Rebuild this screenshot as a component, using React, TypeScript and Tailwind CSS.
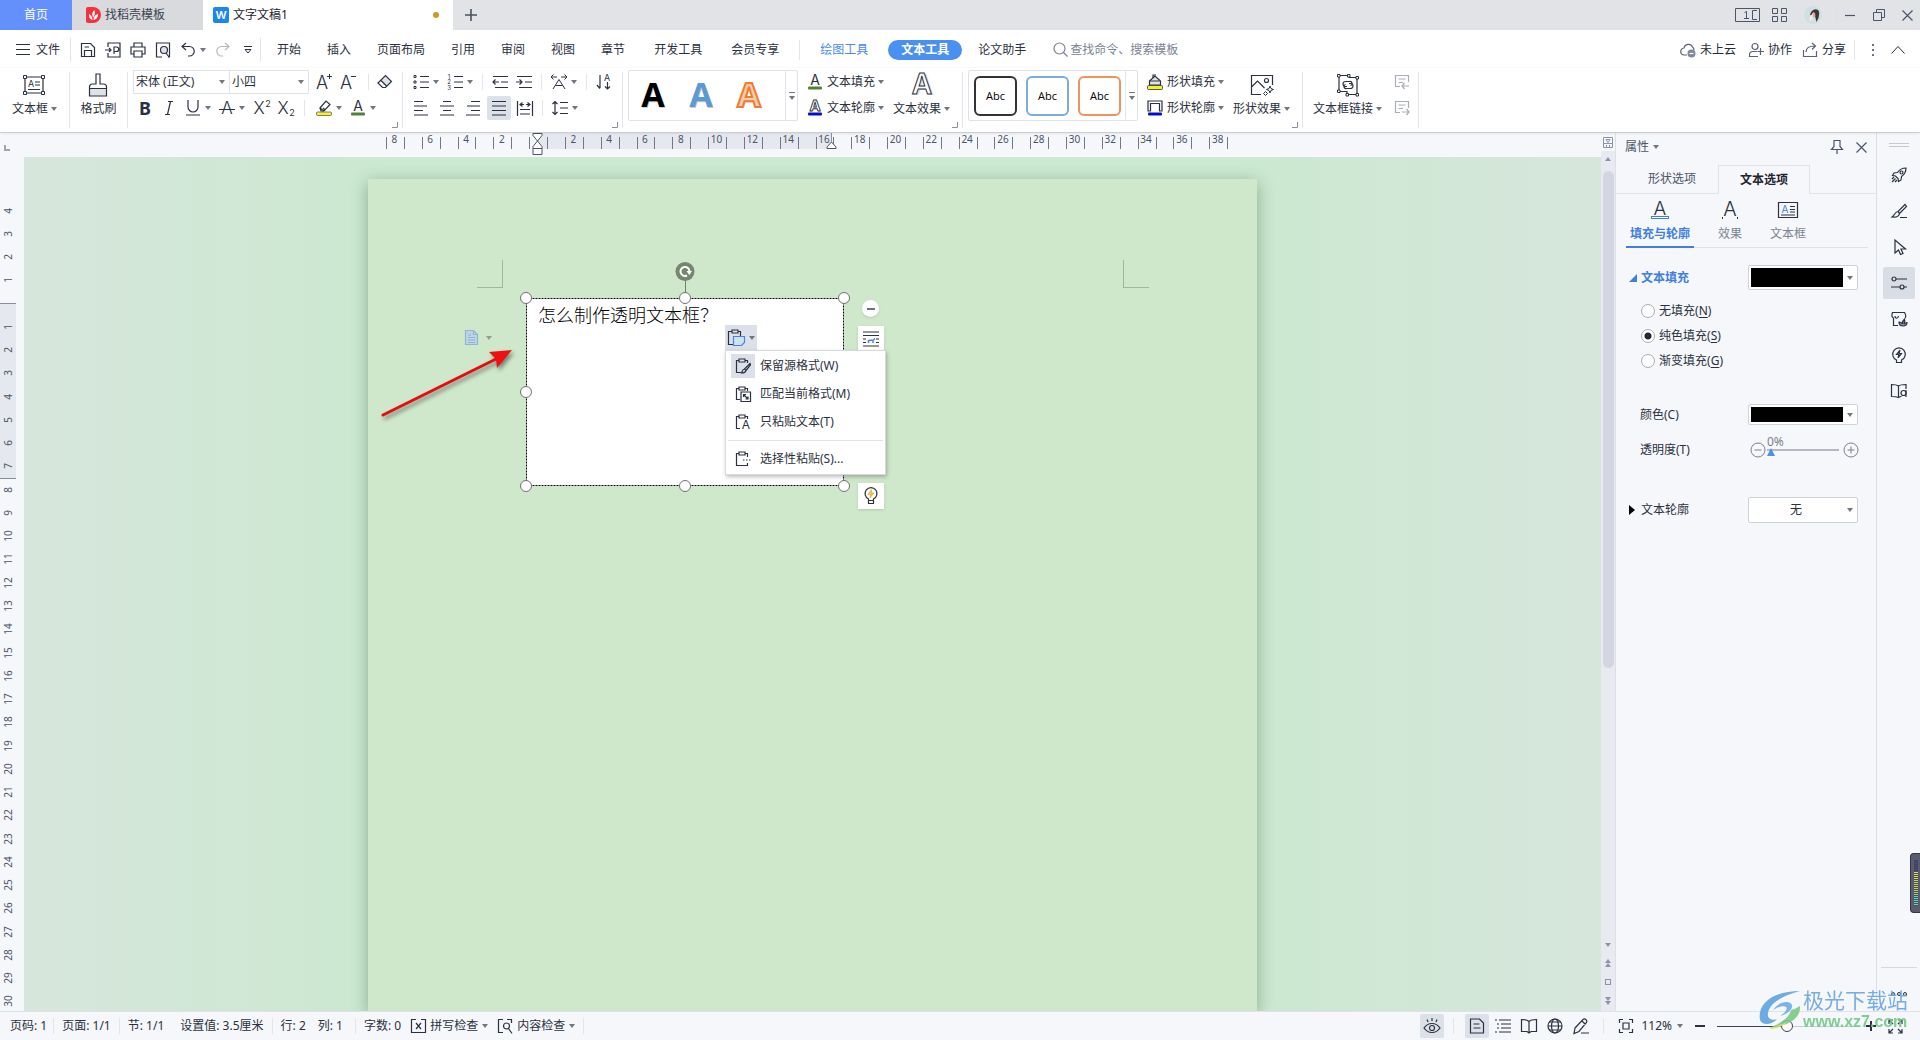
import clsx from "clsx";
import type { ReactNode } from "react";

const MAIN_TABS = ["开始", "插入", "页面布局", "引用", "审阅", "视图", "章节"];
const EXTRA_TABS = ["开发工具", "会员专享"];
const H_RULER = [8, 6, 4, 2, 0, ...Array.from({ length: 19 }, (_, i) => (i + 1) * 2)];
const V_RULER = [4, 3, 2, 1, 0, ...Array.from({ length: 30 }, (_, i) => i + 1)];

export default function App() {
	return (
		<div className="relative flex h-screen flex-col overflow-hidden bg-[#f5f7fa] font-['Noto_Sans','Noto_Sans_CJK_SC',sans-serif] text-xs leading-4 text-[#2b3140]">
			<TitleBar />
			<MenuBar />
			<Ribbon />
			<div className="flex min-h-0 flex-1 border-t border-[#dcdee3]">
				<VerticalRuler />
				<main className="flex min-w-0 flex-1 flex-col">
					<HorizontalRuler />
					<DocumentCanvas />
				</main>
				<ScrollBar />
				<PropertiesPanel />
				<SideToolbar />
			</div>
			<StatusBar />
			<MeterWidget />
			<Watermark />
		</div>
	);
}

/* ---------- shared bits ---------- */

function Icon({
	w = 16,
	h = 16,
	className,
	children,
}: {
	w?: number;
	h?: number;
	className?: string;
	children: ReactNode;
}) {
	return (
		<svg
			width={w}
			height={h}
			viewBox={`0 0 ${w} ${h}`}
			fill="none"
			stroke="currentColor"
			strokeWidth="1.2"
			aria-hidden="true"
			className={clsx("shrink-0 overflow-visible", className)}
		>
			{children}
		</svg>
	);
}

function Caret({ className }: { className?: string }) {
	return (
		<svg
			width="6"
			height="4"
			viewBox="0 0 6 4"
			aria-hidden="true"
			className={clsx("shrink-0", className ?? "fill-[#70757f]")}
		>
			<path d="M0 0h6L3 4z" />
		</svg>
	);
}

function VLine({ className }: { className?: string }) {
	return <span className={clsx("w-px shrink-0 bg-[#e3e5ea]", className)} />;
}

function IconButton({
	label,
	active,
	children,
}: {
	label: string;
	active?: boolean;
	children: ReactNode;
}) {
	return (
		<button
			type="button"
			aria-label={label}
			className={clsx(
				"flex h-6 w-6 shrink-0 items-center justify-center rounded-xs",
				active && "bg-[#dce0e8]",
			)}
		>
			{children}
		</button>
	);
}

function CaretButton({ label, children }: { label: string; children: ReactNode }) {
	return (
		<button
			type="button"
			aria-label={label}
			className="flex h-6 w-[34px] shrink-0 items-center"
		>
			<span className="flex w-6 justify-center">{children}</span>
			<Caret />
		</button>
	);
}

function GlyphText({
	x,
	y,
	size,
	children,
	className,
}: {
	x: number;
	y: number;
	size: number;
	children: ReactNode;
	className?: string;
}) {
	return (
		<text
			x={x}
			y={y}
			fontSize={size}
			textAnchor="middle"
			fill="currentColor"
			stroke="none"
			className={clsx("font-['Inter',sans-serif]", className ?? "font-light")}
		>
			{children}
		</text>
	);
}

/* ---------- title bar ---------- */

function TitleBar() {
	return (
		<header className="flex h-[30px] shrink-0 items-stretch bg-[#e1e3e7]">
			<button type="button" className="w-[72px] bg-[#6390fb] text-white">
				首页
			</button>
			<button
				type="button"
				className="flex w-[131px] items-center gap-1 bg-[#d8dadd] pl-3.5 text-[#3c4250]"
			>
				<svg width="15" height="16" viewBox="0 0 15 16" aria-hidden="true">
					<path d="M0 2a2 2 0 0 1 2-2h5a8 8 0 0 1 0 16H2a2 2 0 0 1-2-2z" fill="#f5313f" />
					<path
						d="M6.500 13C3.500 12 2.500 9.500 3 7c2 .8 3.500 3 3.500 6zM7 10.500C5.600 7.500 6.300 4.500 8.300 3c1.200 2.600.6 5.500-1.300 7.500zM7.500 13c0-3 1.700-5.500 4.500-6 .2 3-1.500 5.400-4.500 6z"
						fill="#fff"
					/>
				</svg>
				找稻壳模板
			</button>
			<button
				type="button"
				className="flex w-[250px] items-center gap-1 bg-white pl-2.5 text-[#1f2430]"
			>
				<span className="flex h-4 w-4 items-center justify-center rounded-xs bg-[#1a86f2] font-['Inter',sans-serif] text-[11px] font-semibold text-white">
					W
				</span>
				文字文稿1
				<span className="mr-3.5 ml-auto h-1.5 w-1.5 rounded-full bg-[#cf9a1d]" />
			</button>
			<button
				type="button"
				aria-label="新建标签"
				className="flex w-9 items-center justify-center text-[#4a5060]"
			>
				<Icon w={12} h={12}>
					<path d="M6 0v12M0 6h12" strokeWidth="1.6" />
				</Icon>
			</button>
			<div className="ml-auto flex items-center pr-[7px] text-[#4b5468]">
				<Icon w={25} h={14} className="mr-3">
					<path d="M.5.5h24v13H.5zM9.500 4.500l2-1v7M9 10.500h5M22 2.500h-4.500v9H22" strokeWidth="1" />
				</Icon>
				<Icon w={15} h={14} className="mr-[17px]">
					<path d="M.5.5h5v5h-5zM9.500.5h5v5h-5zM.5 8.500h5v5h-5zM9.500 8.500h5v5h-5z" strokeWidth="1" />
				</Icon>
				<svg width="18" height="18" viewBox="0 0 18 18" aria-hidden="true" className="mr-2.5">
					<circle cx="9" cy="9" r="9" fill="#cfdfe2" />
					<path d="M6 9c1-5 5-7 8-5 2 2 1 5 .5 8l-2 4-1.500-6z" fill="#3d3439" />
					<path d="m9 6.500 2 2-2.500 4.500L6 16l-.5-4z" fill="#f4ece9" />
					<path d="m9 6 2 1 .5 3-3 2z" fill="#d9a996" />
				</svg>
				<VLine className="mr-3 h-5 bg-[#c9ccd2]" />
				<Icon w={10} h={10} className="mr-[18px]">
					<path d="M0 5.500h10" />
				</Icon>
				<Icon w={12} h={12} className="mr-[17px]">
					<path d="M3.500 3V.5h8v8H9M.5 3.500h8v8h-8z" strokeWidth="1" />
				</Icon>
				<Icon w={11} h={11}>
					<path d="m.5.5 10 10m0-10-10 10" />
				</Icon>
			</div>
		</header>
	);
}

/* ---------- menu bar ---------- */

function MenuBar() {
	return (
		<div className="flex h-[38px] shrink-0 items-center bg-white pt-px">
			<button type="button" className="flex items-center gap-1.5 pl-4">
				<Icon w={14} h={11}>
					<path d="M0 .5h14M0 5.500h14M0 10.500h14" strokeWidth="1" />
				</Icon>
				文件
			</button>
			<VLine className="mr-[5px] ml-2.5 h-6" />
			<div className="flex gap-px">
				<IconButton label="保存">
					<Icon>
						<path d="M1.500 14.500v-13h9l4 4v9zM4.500 14.500v-6h7v6M4.500 5H9" />
					</Icon>
				</IconButton>
				<IconButton label="输出为PDF">
					<Icon>
						<path d="M3 5V1h12v14H3v-4M0 8h6M4 6l2 2-2 2M9 12V5h2.500a2 2 0 0 1 0 4.500H9" />
					</Icon>
				</IconButton>
				<IconButton label="打印">
					<Icon>
						<path d="M4 5V1h8v4M4 12H1V5h14v7h-3M4 9h8v6H4z" />
					</Icon>
				</IconButton>
				<IconButton label="打印预览">
					<Icon>
						<path d="M7 15H1.500V1h13v14H13" />
						<circle cx="9" cy="8" r="3.500" fill="#dfe2e8" />
						<path d="m11 11 3 4" />
					</Icon>
				</IconButton>
				<CaretButton label="撤销">
					<Icon>
						<path d="M6 1 2 4.500 6 8M2 4.500h7.500a4.700 4.700 0 0 1 0 9.500H8" />
					</Icon>
				</CaretButton>
				<IconButton label="恢复">
					<Icon className="text-[#b4b8c0]">
						<path d="m10 1 4 3.500L10 8M14 4.500H6.500a4.700 4.700 0 0 0 0 9.500H8" />
					</Icon>
				</IconButton>
				<IconButton label="自定义快速访问">
					<Icon w={8} h={8}>
						<path d="M0 .5h8M1 3.500h6L4 7z" strokeWidth="1" />
					</Icon>
				</IconButton>
			</div>
			<VLine className="mr-4 h-6" />
			<nav className="flex gap-[26px]">
				{MAIN_TABS.map((tab) => (
					<button key={tab} type="button">
						{tab}
					</button>
				))}
			</nav>
			<nav className="ml-[29px] flex gap-[29px]">
				{EXTRA_TABS.map((tab) => (
					<button key={tab} type="button">
						{tab}
					</button>
				))}
			</nav>
			<VLine className="mx-5 h-5" />
			<button type="button" className="text-[#4a8ae8]">
				绘图工具
			</button>
			<button
				type="button"
				className="ml-5 h-5 rounded-full bg-[#4a90f0] px-[13px] font-bold text-white"
			>
				文本工具
			</button>
			<button type="button" className="ml-4">
				论文助手
			</button>
			<label className="ml-[27px] flex items-center gap-0.5 text-[#7b8394]">
				<Icon w={15} h={15}>
					<circle cx="6.500" cy="6.500" r="5.500" />
					<path d="m10.500 10.500 4 4" />
				</Icon>
				<input
					aria-label="搜索"
					placeholder="查找命令、搜索模板"
					className="w-32 bg-transparent outline-none placeholder:text-[#7b8394]"
				/>
			</label>
			<div className="ml-auto flex items-center pr-[15px] text-[#262c3a]">
				<button type="button" className="flex items-center gap-1">
					<Icon className="text-[#5a6172]">
						<path d="M7 13H4.500A3.500 3.500 0 0 1 4 6a4.500 4.500 0 0 1 8.500-1c1 .8 1.500 2 1.500 3" />
						<circle cx="11.500" cy="11.500" r="4" fill="#7e879b" stroke="none" />
						<path d="M9.500 11.500h4" stroke="#fff" />
					</Icon>
					未上云
				</button>
				<button type="button" className="ml-3 flex items-center gap-1">
					<Icon className="text-[#5a6172]">
						<circle cx="7" cy="4.500" r="3" />
						<path d="M9 9.500H5A3.500 3.500 0 0 0 1.500 13v1.500H10M12.500 6v7M9.500 9.500H16" />
					</Icon>
					协作
				</button>
				<button type="button" className="ml-2.5 flex items-center gap-1">
					<Icon className="text-[#5a6172]">
						<path d="M1.500 8v6.500h13V9M4 10c0-4 3-6 9-6M10 1l3.500 3L10 7.500" />
					</Icon>
					分享
				</button>
				<VLine className="ml-2 h-5" />
				<Icon w={4} h={14} className="mx-4 text-[#6a7182]">
					<path d="M2 1v2M2 6v2M2 11v2" strokeWidth="2" />
				</Icon>
				<Icon w={14} h={8}>
					<path d="m.5 7.500 6.500-7 6.500 7" strokeWidth="1" />
				</Icon>
			</div>
		</div>
	);
}

/* ---------- ribbon ---------- */

function Ribbon() {
	return (
		<div className="relative z-10 flex h-16 shrink-0 bg-white shadow-[0_1px_3px_rgba(0,0,0,0.12)]">
			<div className="flex w-[69px] justify-center">
				<BigButton
					label="文本框"
					caret
					icon={
						<Icon w={24} h={22}>
							<path d="M3 3h18v16H3zM13 8h5M13 11h5M6 15.500h12" />
							<path d="M1.500 1.500h3v3h-3zM19.500 1.500h3v3h-3zM1.500 17.500h3v3h-3zM19.500 17.500h3v3h-3z" fill="#fff" strokeWidth="1" />
							<GlyphText x={9} y={13} size={9} className="font-normal">A</GlyphText>
						</Icon>
					}
				/>
			</div>
			<VLine className="my-1" />
			<div className="flex w-[57px] justify-center">
				<BigButton
					label="格式刷"
					icon={
						<Icon w={20} h={24}>
							<path d="M1 15h18v8H1z" fill="#dfe2e8" stroke="none" />
							<path d="M1.500 23V14c0-2 1-3 3-3H8V1h4v10h3.500c2 0 3 1 3 3v9zM1.500 15.500h17" />
						</Icon>
					}
				/>
			</div>
			<VLine className="my-1" />
			<FontGroup />
			<VLine className="my-1" />
			<ParagraphGroup />
			<VLine className="my-1" />
			<WordArtGroup />
			<VLine className="my-1" />
			<ShapeGroup />
			<VLine className="my-1" />
			<div className="flex w-[115px] pl-2.5">
				<BigButton
					label="文本框链接"
					caret
					icon={
						<Icon w={24} h={24}>
							<path d="M3 2.500h10v2h8v17H11v-3H3z" />
							<path d="M1.500 1.500h2.500v2.500h-2.500zM11.500 1.500h2.500v2.500h-2.500zM20 3.500h2.500V6H20zM1.500 17H4v2.500H1.500zM10 20.500h2.500v2.500H10zM20 20.500h2.500v2.500H20z" fill="#fff" strokeWidth="1" />
							<path d="M11 13.500H9.500a2 2 0 0 1 0-5h4a2 2 0 0 1 1 4M13 10.500h1.500a2 2 0 0 1 0 5h-4a2 2 0 0 1-1-4" />
						</Icon>
					}
				/>
				<div className="ml-2 flex flex-col gap-0.5 pt-0.5 text-[#a9adb6]">
					<IconButton label="上一文本框">
						<Icon>
							<path d="M6 12.500H1.500V1.500h13V8M4.500 5h7M4.500 8.500H9M15 12H8M10.500 9 8 12l2.500 3" />
						</Icon>
					</IconButton>
					<IconButton label="下一文本框">
						<Icon>
							<path d="M6 12.500H1.500V1.500h13V8M4.500 5h7M4.500 8.500H9M8 12h7M12.500 9l2.500 3-2.500 3" />
						</Icon>
					</IconButton>
				</div>
			</div>
			<VLine className="my-1" />
		</div>
	);
}

function BigButton({
	label,
	icon,
	caret,
}: {
	label: string;
	icon: ReactNode;
	caret?: boolean;
}) {
	return (
		<button type="button" className="flex shrink-0 flex-col items-center pt-1">
			<span className="flex h-[26px] items-center">{icon}</span>
			<span className="mt-[3px] flex items-center gap-[3px] whitespace-nowrap">
				{label}
				{caret && <Caret />}
			</span>
		</button>
	);
}

function Launcher() {
	return (
		<Icon w={6} h={6} className="absolute right-1 bottom-1 text-[#8a909c]">
			<path d="M0 5.500h5.500V0" strokeWidth="1" />
		</Icon>
	);
}

function FontGroup() {
	return (
		<div className="relative w-[274px] pl-[5px]">
			<div className="flex h-7 items-center">
				<div className="mr-[3px] flex h-6 w-44 shrink-0 border border-[#dfe2e8]">
					<label className="flex w-24 items-center border-r border-[#dfe2e8] pr-1">
						<select aria-label="字体" className="min-w-0 flex-1 appearance-none bg-transparent pl-0.5 outline-none">
							<option>宋体 (正文)</option>
						</select>
						<Caret />
					</label>
					<label className="flex flex-1 items-center pr-1">
						<select aria-label="字号" className="min-w-0 flex-1 appearance-none bg-transparent pl-0.5 outline-none">
							<option>小四</option>
						</select>
						<Caret />
					</label>
				</div>
				<IconButton label="增大字号">
					<Icon w={18} h={18}>
						<GlyphText x={7} y={16} size={18}>A</GlyphText>
						<path d="M12 3.500h5M14.500 1v5" strokeWidth="1" />
					</Icon>
				</IconButton>
				<IconButton label="减小字号">
					<Icon w={18} h={18}>
						<GlyphText x={7} y={16} size={18}>A</GlyphText>
						<path d="M12 3.500h5" strokeWidth="1" />
					</Icon>
				</IconButton>
				<VLine className="mx-2 h-4" />
				<button type="button" aria-label="清除格式">
					<Icon>
						<path d="m4 6.500 4.500-4.500 6 6-4.500 4.500z" fill="#dfe2e8" stroke="none" />
						<path d="m1 9 7.500-7.500 6 6L8.500 13.500H5.500zM4 6.500l6 6" />
					</Icon>
				</button>
			</div>
			<div className="flex h-6 items-center">
				<IconButton label="加粗">
					<span className="text-lg font-bold leading-5">B</span>
				</IconButton>
				<IconButton label="倾斜">
					<Icon>
						<path d="M7 1.500h5M4 14.500h5M9.500 1.500l-3 13" />
					</Icon>
				</IconButton>
				<CaretButton label="下划线">
					<Icon>
						<path d="M3 0v7a5 5 0 0 0 10 0V0M1 15h14" />
					</Icon>
				</CaretButton>
				<CaretButton label="删除线">
					<Icon>
						<GlyphText x={8} y={14} size={17}>A</GlyphText>
						<path d="M0 9.500h16" strokeWidth="1" />
					</Icon>
				</CaretButton>
				<IconButton label="上标">
					<Icon w={18} h={18}>
						<GlyphText x={7} y={15} size={17}>X</GlyphText>
						<GlyphText x={16} y={8} size={9} className="font-normal">2</GlyphText>
					</Icon>
				</IconButton>
				<IconButton label="下标">
					<Icon w={18} h={18}>
						<GlyphText x={7} y={15} size={17}>X</GlyphText>
						<GlyphText x={16} y={17} size={9} className="font-normal">2</GlyphText>
					</Icon>
				</IconButton>
				<VLine className="mx-[7px] h-4" />
				<CaretButton label="突出显示">
					<Icon>
						<path d="m5 11-1-3 6-7 4 3.500-6 6.500z" />
						<path d="m7 8 2 2M4 8l4 3" />
						<rect x=".5" y="12" width="15" height="3.500" rx="1" fill="#f7f22c" strokeWidth=".6" />
					</Icon>
				</CaretButton>
				<CaretButton label="字体颜色">
					<Icon>
						<GlyphText x={8} y={11} size={14} className="font-normal">A</GlyphText>
						<rect x="1" y="12.500" width="14" height="3" rx="1" fill="#548235" stroke="none" />
					</Icon>
				</CaretButton>
			</div>
			<Launcher />
		</div>
	);
}

function ParagraphGroup() {
	return (
		<div className="relative w-[219px] pl-1.5">
			<div className="flex h-7 items-center">
				<CaretButton label="项目符号">
					<Icon>
						<path d="M7 2.500h9M7 8h9M7 13.500h9" />
						<path d="M1 1.500h2v2H1zM1 7h2v2H1zM1 12.500h2v2H1z" strokeWidth="1" />
					</Icon>
				</CaretButton>
				<CaretButton label="编号">
					<Icon>
						<path d="M7 2.500h9M7 8h9M7 13.500h9" />
						<GlyphText x={2} y={5} size={6} className="font-normal">1</GlyphText>
						<GlyphText x={2} y={10} size={6} className="font-normal">2</GlyphText>
						<GlyphText x={2} y={16} size={6} className="font-normal">3</GlyphText>
					</Icon>
				</CaretButton>
				<VLine className="mx-[5px] h-4" />
				<IconButton label="减少缩进">
					<Icon>
						<path d="M1 2.500h15M9 8h7M3 13.500h13M7 8H1M3.500 5.500 1 8l2.500 2.500" />
					</Icon>
				</IconButton>
				<IconButton label="增加缩进">
					<Icon>
						<path d="M1 2.500h15M9 8h7M3 13.500h13M0 8h6M3.500 5.500 6 8l-2.500 2.500" />
					</Icon>
				</IconButton>
				<VLine className="mx-[5px] h-4" />
				<CaretButton label="中文版式">
					<Icon>
						<path d="m2 15 6-9.500 6 9.500M4.500 11.500h7" strokeWidth="1" />
						<path d="M6 3H0M2.500.5 0 3l2.500 2.500M10 3h6M13.500.5 16 3l-2.500 2.500" strokeWidth="1" />
					</Icon>
				</CaretButton>
				<VLine className="mx-[5px] h-4" />
				<IconButton label="排序">
					<Icon>
						<path d="M4 1v13M1 11l3 3.500M11.500 8v7M9 12.500l2.500 2.500 2.500-2.500" />
						<GlyphText x={11} y={7} size={9} className="font-normal">A</GlyphText>
					</Icon>
				</IconButton>
			</div>
			<div className="flex h-6 items-center gap-0.5">
				<IconButton label="左对齐">
					<Icon>
						<path d="M1 1.500h9M1 6h13M1 10.500h9M1 15h14" />
					</Icon>
				</IconButton>
				<IconButton label="居中">
					<Icon>
						<path d="M4 1.500h8M1 6h14M4 10.500h8M1 15h14" />
					</Icon>
				</IconButton>
				<IconButton label="右对齐">
					<Icon>
						<path d="M6 1.500h9M2 6h13M6 10.500h9M1 15h14" />
					</Icon>
				</IconButton>
				<IconButton label="两端对齐" active>
					<Icon>
						<path d="M1 1.500h14M1 6h14M1 10.500h14M1 15h14" />
					</Icon>
				</IconButton>
				<IconButton label="分散对齐">
					<Icon>
						<path d="M.5 1v15M15.500 1v15M3 4.500h4M9 4.500h4M5.500 2.500l-2.500 2 2.500 2M10.500 2.500l2.500 2-2.500 2M3 9.500h10M3 14h10" />
					</Icon>
				</IconButton>
				<VLine className="mx-[3px] h-4" />
				<CaretButton label="行距">
					<Icon>
						<path d="M3 1.500v13M.5 4 3 1.500 5.500 4M.5 12 3 14.500 5.500 12M8 2.500h8M8 8h8M8 13.500h8" />
					</Icon>
				</CaretButton>
			</div>
			<Launcher />
		</div>
	);
}

function GalleryMore() {
	return (
		<button
			type="button"
			aria-label="更多样式"
			className="ml-auto flex w-3 flex-col items-center justify-center gap-[3px] border-l border-[#e3e5ea]"
		>
			<span className="h-px w-1.5 bg-[#70757f]" />
			<Caret />
		</button>
	);
}

function RowButton({ icon, label }: { icon: ReactNode; label: string }) {
	return (
		<button type="button" className="flex h-6 items-center whitespace-nowrap">
			<span className="flex w-6 justify-center">{icon}</span>
			<span className="mr-[3px]">{label}</span>
			<Caret />
		</button>
	);
}

function WordArtGroup() {
	return (
		<div className="relative flex w-[339px] pl-[5px]">
			<div className="mt-0.5 flex h-[51px] w-[170px] shrink-0 rounded-xs border border-[#dfe2e8]">
				<ArtLetter fill="#000" stroke="none" />
				<ArtLetter fill="#5b9bd5" stroke="none" />
				<ArtLetter fill="#f8cbad" stroke="#ed7d31" />
				<GalleryMore />
			</div>
			<div className="ml-[5px] flex flex-col gap-0.5 pt-0.5">
				<RowButton
					label="文本填充"
					icon={
						<Icon>
							<GlyphText x={8} y={11} size={14} className="font-normal">A</GlyphText>
							<rect x="1" y="12.500" width="14" height="3" rx="1" fill="#548235" stroke="none" />
						</Icon>
					}
				/>
				<RowButton
					label="文本轮廓"
					icon={
						<Icon>
							<text x="8" y="11" fontSize="15" textAnchor="middle" fill="#fff" strokeWidth=".9" className="font-['Inter',sans-serif] font-bold">
								A
							</text>
							<rect x="1" y="12.500" width="14" height="3" rx="1" fill="#0a0acb" stroke="none" />
						</Icon>
					}
				/>
			</div>
			<div className="ml-[9px]">
				<BigButton
					label="文本效果"
					caret
					icon={
						<Icon w={26} h={24}>
							<text x="15" y="22" fontSize="28" textAnchor="middle" fill="#dfe0e3" stroke="none" className="font-['Inter',sans-serif] font-semibold">
								A
							</text>
							<text x="13" y="21" fontSize="28" textAnchor="middle" fill="#fff" strokeWidth="1" className="font-['Inter',sans-serif] font-semibold">
								A
							</text>
						</Icon>
					}
				/>
			</div>
			<Launcher />
		</div>
	);
}

function ArtLetter({ fill, stroke }: { fill: string; stroke: string }) {
	return (
		<button type="button" aria-label="艺术字样式" className="flex w-12 items-center justify-center">
			<svg width="32" height="32" viewBox="0 0 32 32" aria-hidden="true" className="overflow-visible">
				<text x="17" y="28" fontSize="34" textAnchor="middle" fill="#000" opacity=".2" className="font-['Open_Sans',sans-serif] font-bold">
					A
				</text>
				<text x="16" y="27" fontSize="34" textAnchor="middle" fill={fill} stroke={stroke} strokeWidth="2" className="font-['Open_Sans',sans-serif] font-bold">
					A
				</text>
			</svg>
		</button>
	);
}

function ShapeGroup() {
	const shape = "h-10 w-[43px] rounded-md border-2 font-['Open_Sans',sans-serif] text-[11px] text-black";
	return (
		<div className="relative flex w-[339px] pl-[5px]">
			<div className="mt-0.5 flex h-[51px] w-[170px] shrink-0 items-stretch rounded-xs border border-[#dfe2e8]">
				<div className="flex items-center gap-[9px] pl-[5px]">
					<button type="button" className={clsx(shape, "border-[#333]")}>Abc</button>
					<button type="button" className={clsx(shape, "border-[#7dabdd]")}>Abc</button>
					<button type="button" className={clsx(shape, "border-[#f0935a]")}>Abc</button>
				</div>
				<GalleryMore />
			</div>
			<div className="ml-[5px] flex flex-col gap-0.5 pt-0.5">
				<RowButton
					label="形状填充"
					icon={
						<Icon>
							<path d="M2.500 7 8 2l5.500 5v4h-11z" fill="#dfe2e8" />
							<path d="M2.500 7h10M6 4V1h3" />
							<rect x=".5" y="11.500" width="15" height="4" rx="1" fill="#f7f22c" strokeWidth=".8" />
						</Icon>
					}
				/>
				<RowButton
					label="形状轮廓"
					icon={
						<Icon>
							<path d="M1 11V1h14v10h-2.500V3.500h-9V11z" />
							<rect x="1" y="12.500" width="14" height="3" rx="1" fill="#0a0acb" stroke="none" />
						</Icon>
					}
				/>
			</div>
			<div className="ml-[9px]">
				<BigButton
					label="形状效果"
					caret
					icon={
						<Icon w={24} h={22}>
							<path d="M11 20.500H1.500v-19h21V11M1.500 13l6-6 7 7" />
							<circle cx="16.500" cy="6.500" r="2" />
							<path d="m20 12 1 2.500 2.500 1-2.500 1L20 19l-1-2.500-2.500-1 2.500-1zM15.500 17.500l2 2-2 2-2-2z" strokeWidth="1" />
						</Icon>
					}
				/>
			</div>
			<Launcher />
		</div>
	);
}

/* ---------- rulers ---------- */

function VerticalRuler() {
	return (
		<div className="flex w-6 shrink-0 flex-col overflow-hidden text-[10px] text-[#4b5468]">
			<Icon w={6} h={6} className="mt-3 ml-1 text-[#a0a4ad]">
				<path d="M1 0v5h5" strokeWidth="2" />
			</Icon>
			<div className="mt-12 grid h-[814px] w-4 shrink-0 grid-rows-[repeat(35,1fr)] bg-[linear-gradient(transparent_104px,#8a8fa0_104px,#8a8fa0_105px,#e5e8ee_105px,#e5e8ee_279px,#8a8fa0_279px,#8a8fa0_280px,transparent_280px)]">
				{V_RULER.map((n, i) => (
					<span key={i} className="flex items-center justify-center">
						{n > 0 && <span className="-rotate-90 leading-3">{n}</span>}
					</span>
				))}
			</div>
		</div>
	);
}

function HorizontalRuler() {
	return (
		<div className="flex h-6 shrink-0 justify-center text-[10px] text-[#4b5468]">
			<div className="relative w-[889px] pl-[18px]">
				<div className="absolute top-0 left-[169px] h-4 w-[294px] bg-[#e5e8ee]" />
				<div className="relative grid h-4 w-[859px] grid-cols-[repeat(24,1fr)]">
					{H_RULER.map((n, i) => (
						<span key={i} className="grid grid-cols-2">
							<span className="mt-1 h-3 border-l border-[#70788c] pr-0.5 text-center leading-1">
								{n > 0 && n}
							</span>
							<span className="mt-1 h-3 border-l border-[#70788c]" />
						</span>
					))}
				</div>
				<Icon w={11} h={22} className="absolute top-0 left-[164px]">
					<path d="M1 .5h9v2L5.500 8 10 13.500v2H1v-2L5.500 8 1 2.500zM1 15.500h9v6H1z" fill="#fff" strokeWidth="1" />
				</Icon>
				<Icon w={11} h={16} className="absolute top-0 left-[458px]">
					<path d="M5.500 0v9" stroke="#8a8fa0" strokeWidth="1" />
					<path d="m5.500 9 4.500 5v1.500H1V14z" fill="#fff" strokeWidth="1" />
				</Icon>
			</div>
		</div>
	);
}

/* ---------- document ---------- */

const HANDLES = [
	"top-0 left-0",
	"top-0 left-1/2",
	"top-0 left-full",
	"top-1/2 left-0",
	"top-full left-0",
	"top-full left-1/2",
	"top-full left-full",
];

function DocumentCanvas() {
	return (
		<div className="flex min-h-0 flex-1 justify-center overflow-hidden bg-[linear-gradient(90deg,#d7e6dc,#cbe8d0_22%,#cbe8d0_78%,#d7e6dc)] pt-[22px]">
			<div className="relative w-[889px] shrink-0 bg-[#cfe8cb] shadow-[0_4px_16px_rgba(40,80,50,0.4)]">
				{/* margin corners */}
				<div className="absolute top-[81px] left-[109px] h-7 w-[26px] border-r border-b border-[#a3b5a2]" />
				<div className="absolute top-[81px] left-[755px] h-7 w-[26px] border-b border-l border-[#a3b5a2]" />

				<div className="absolute top-[151px] left-[97px] flex items-center gap-2">
					<Icon w={13} h={15} className="text-[#93b4d6]">
						<path d="M.5.5h8l4 4v10H.5z" fill="#bdd5e0" />
						<path d="M8.500.5v4h4M3 5h3M3 7.500h7M3 10h7M3 12.500h7" />
					</Icon>
					<Caret className="fill-[#8fa08d]" />
				</div>

				<svg
					width="140"
					height="76"
					viewBox="0 0 140 76"
					aria-hidden="true"
					className="absolute top-[167px] left-[10px] drop-shadow-[2px_3px_2px_rgba(0,0,0,0.45)]"
				>
					<path d="M5 69 122 11" stroke="#e60d0d" strokeWidth="3" strokeLinecap="round" />
					<path d="m134 4-15 18-1-9-7-7z" fill="#f01010" />
				</svg>

				{/* selected text box */}
				<div className="absolute top-[119px] left-[158px] h-[188px] w-[318px] bg-white">
					<svg width="318" height="188" aria-hidden="true" className="absolute inset-0">
						<rect x=".5" y=".5" width="317" height="187" fill="none" stroke="#000" strokeDasharray="2 1" />
					</svg>
					<p className="mt-1.5 ml-3 font-['Noto_Sans_CJK_SC',sans-serif] text-lg leading-5 font-light text-black">
						怎么制作透明文本框？
					</p>
					<div className="absolute -top-6 left-1/2 h-6 w-px bg-[#6f7f6d]" />
					<div className="absolute -top-9 left-1/2 flex h-[19px] w-[19px] -translate-x-1/2 items-center justify-center rounded-full bg-[#76866f]">
						<Icon w={13} h={13} className="text-white">
							<path d="M8.500 10.500A4.500 4.500 0 1 1 11 6.500" strokeWidth="2" />
							<path d="M8 6h5.500l-2.800 4z" fill="#fff" stroke="none" />
						</Icon>
					</div>
					{HANDLES.map((pos) => (
						<span
							key={pos}
							className={clsx(
								"absolute h-3 w-3 -translate-x-1/2 -translate-y-1/2 rounded-full border border-[#707070] bg-white",
								pos,
							)}
						/>
					))}
				</div>

				<FloatingTools />
				<PasteMenu />
			</div>
		</div>
	);
}

function FloatingTools() {
	return (
		<>
			<button
				type="button"
				aria-label="收起"
				className="absolute top-[121px] left-[494px] flex h-[17px] w-[17px] items-center justify-center rounded-full bg-white shadow-sm"
			>
				<span className="h-0.5 w-2 bg-[#6c7280]" />
			</button>
			<button
				type="button"
				aria-label="布局选项"
				className="absolute top-[147px] left-[490px] flex h-[26px] w-[26px] items-center justify-center bg-white shadow"
			>
				<Icon>
					<path d="M0 1h16M0 4.500h16M0 8h3M13 8h3M0 11.500h3M13 11.500h3M0 15h16" />
					<path d="M5.500 12V9.500l5-.5 1.500-1.500M10 12V9" stroke="#4a84d8" strokeWidth="1.500" />
				</Icon>
			</button>
			<button
				type="button"
				aria-label="智能提示"
				className="absolute top-[304px] left-[490px] flex h-[26px] w-[26px] items-center justify-center bg-white shadow"
			>
				<Icon w={14} h={18}>
					<path d="M4.500 13.500v-1.500a6 6 0 1 1 5 0v1.500zM4.500 16.500h5v-3h-5z" />
					<path d="M7.500 2.500 4 7.500h2.500L6 11l4-5H7.500z" fill="#f6c445" stroke="#e0a21c" strokeWidth=".6" />
				</Icon>
			</button>
		</>
	);
}

function PasteMenu() {
	return (
		<div className="absolute top-[146px] left-[357px]">
			<button
				type="button"
				aria-label="粘贴选项"
				className="flex h-[25px] w-8 items-center justify-center gap-1 bg-[#dce0e8]"
			>
				<Icon w={18} h={18}>
					<path d="M5 2.500H1.500v13H6M11 2.500h2.500V7M5 1h6v3H5z" />
					<path d="M6.500 7.500h11v6l-3 3h-8z" fill="#cfe0fb" stroke="#4a84d8" />
				</Icon>
				<Caret />
			</button>
			<div className="w-[161px] border border-[#d5d8de] bg-white py-px shadow-[1px_2px_4px_rgba(0,0,0,0.25)]">
				<PasteItem label="保留源格式(W)" active>
					<path d="M4 2.500H1.500v12H6M10 2.500h2.500V5M4 1h6v3H4z" />
					<path d="M15 5.500 9.500 11l1.500 1.500L15.500 7zM9.500 11c-2 0-2 2-3 4 2.500 0 4-.5 4.500-2.500" />
				</PasteItem>
				<PasteItem label="匹配当前格式(M)">
					<path d="M4 2.500H1.500v11H5M10 2.500h2.500V5M4 1h6v3H4zM6 6h9.500v9.500H6z" />
					<path d="m8.500 8.500 4.500 4.500M8.500 11V8.500H11M13 10.500V13h-2.500" />
				</PasteItem>
				<PasteItem label="只粘贴文本(T)">
					<path d="M4 2.500H1.500v12H5M10 2.500h2.500V5M4 1h6v3H4z" />
					<GlyphText x={11} y={15} size={12} className="font-normal">A</GlyphText>
				</PasteItem>
				<div className="mx-0.5 my-1 h-px bg-[#dfe2e8]" />
				<PasteItem label="选择性粘贴(S)...">
					<path d="M4 2.500H1.500v12h11V12M10 2.500h2.500V6M4 1h6v3H4z" />
					<path d="M8 9h1.500M11 9h1.500M14 9h1.500" />
				</PasteItem>
			</div>
		</div>
	);
}

function PasteItem({
	label,
	active,
	children,
}: {
	label: string;
	active?: boolean;
	children: ReactNode;
}) {
	return (
		<button type="button" className="flex h-7 w-full items-center gap-[5px] pl-[5px]">
			<span
				className={clsx(
					"flex h-6 w-6 items-center justify-center",
					active && "bg-[#dce0e8]",
				)}
			>
				<Icon>{children}</Icon>
			</span>
			{label}
		</button>
	);
}

function ScrollBar() {
	return (
		<div className="flex w-3.5 shrink-0 flex-col items-center bg-[#e9eaf1] text-[#8d93a8]">
			<div className="flex h-[18px] w-full items-center justify-center bg-[#f5f7fa]">
				<Icon w={10} h={11}>
					<path d="M.5.5h9v10h-9zM.5 6.500h9M3 2.500h4L5 5.500zM3.500 8v2M6.500 8v2" strokeWidth="1" />
				</Icon>
			</div>
			<Caret className="my-1.5 rotate-180 fill-[#8d93a8]" />
			<div className="mt-1 h-[497px] w-[11px] rounded-md bg-[#d3d6e0]" />
			<div className="mt-auto flex flex-col items-center gap-3 pb-1.5">
				<Caret className="fill-[#8d93a8]" />
				<span className="flex flex-col">
					<Caret className="rotate-180 fill-[#8d93a8]" />
					<Caret className="rotate-180 fill-[#8d93a8]" />
				</span>
				<span className="h-1.5 w-1.5 border border-[#8d93a8]" />
				<span className="flex flex-col">
					<Caret className="fill-[#8d93a8]" />
					<Caret className="fill-[#8d93a8]" />
				</span>
			</div>
		</div>
	);
}

/* ---------- properties panel ---------- */

function PropertiesPanel() {
	return (
		<aside className="w-[261px] shrink-0 border-l border-[#dcdfe6]">
			<div className="flex h-8 items-center gap-1 px-[9px] pb-1 text-[#4b5468]">
				属性
				<Caret />
				<button type="button" aria-label="固定" className="mr-2 ml-auto">
					<Icon w={14} h={14}>
						<path d="M4 .5h6v6l2.500 3h-11l2.500-3zM7 9.500V14" />
					</Icon>
				</button>
				<button type="button" aria-label="关闭">
					<Icon w={11} h={11}>
						<path d="m.5.5 10 10m0-10-10 10" />
					</Icon>
				</button>
			</div>
			<div className="flex h-[29px] text-[#4b5468]">
				<button type="button" className="w-[102px] border-b border-[#dfe2e8] pl-2.5">
					形状选项
				</button>
				<button
					type="button"
					className="w-[92px] border border-b-0 border-[#dfe2e8] font-bold text-[#1f2430]"
				>
					文本选项
				</button>
				<span className="flex-1 border-b border-[#dfe2e8]" />
			</div>
			<div className="mr-2 ml-2.5 flex border-b border-[#dfe2e8] pt-1.5 text-[#7b8394]">
				<SubTab label="填充与轮廓" active>
					<GlyphText x={10} y={15} size={19}>A</GlyphText>
					<rect x="1.500" y="16.500" width="17" height="2" fill="#fff" stroke="#3f7fe0" strokeWidth="1" />
				</SubTab>
				<SubTab label="效果">
					<GlyphText x={10} y={16} size={20}>A</GlyphText>
					<path d="M2.500 17v2M17.500 17v2" strokeWidth="1" />
				</SubTab>
				<SubTab label="文本框">
					<path d="M.5 2.500h19v15H.5zM12 6.500h5M12 9.500h5M12 12h5M3 15h14" />
					<GlyphText x={7} y={13} size={10} className="text-[#3f7fe0]">A</GlyphText>
				</SubTab>
			</div>

			<div className="mt-4 flex h-[27px] items-center pr-[18px] pl-[13px]">
				<svg width="8" height="8" viewBox="0 0 8 8" aria-hidden="true" className="fill-[#3f7fe0]">
					<path d="M8 0v8H0z" />
				</svg>
				<span className="ml-1 font-bold text-[#3f7fe0]">文本填充</span>
				<SwatchSelect label="文本填充" tall />
			</div>
			<fieldset className="mt-[7px] pl-[25px]">
				<FillRadio text="无填充" hotkey="N" />
				<FillRadio text="纯色填充" hotkey="S" checked />
				<FillRadio text="渐变填充" hotkey="G" />
			</fieldset>
			<div className="mt-[31px] flex h-[21px] items-center pr-[18px] pl-6">
				颜色(C)
				<SwatchSelect label="颜色" />
			</div>
			<div className="mt-[11px] flex h-7 items-center pr-[17px] pl-6">
				<label htmlFor="opacity">透明度(T)</label>
				<div className="ml-auto flex items-center gap-px text-[#7b808c]">
					<button type="button" aria-label="降低透明度">
						<Icon>
							<circle cx="8" cy="8" r="7" strokeWidth="1" />
							<path d="M4.500 8h7" strokeWidth="1" />
						</Icon>
					</button>
					<div className="relative flex w-[75px] items-center">
						<output className="absolute bottom-2 left-0 leading-4">0%</output>
						<input
							id="opacity"
							type="range"
							defaultValue={0}
							className="h-4 w-full appearance-none bg-[linear-gradient(#b5b8c0,#b5b8c0)] bg-[length:72px_2px] bg-left bg-no-repeat outline-none [&::-webkit-slider-thumb]:mt-1 [&::-webkit-slider-thumb]:h-2 [&::-webkit-slider-thumb]:w-2 [&::-webkit-slider-thumb]:appearance-none [&::-webkit-slider-thumb]:bg-[#4a90f0] [&::-webkit-slider-thumb]:[clip-path:polygon(50%_0,100%_100%,0_100%)]"
						/>
					</div>
					<button type="button" aria-label="提高透明度">
						<Icon>
							<circle cx="8" cy="8" r="7" strokeWidth="1" />
							<path d="M4.500 8h7M8 4.500v7" strokeWidth="1" />
						</Icon>
					</button>
				</div>
			</div>
			<div className="mt-[33px] flex h-[26px] items-center pr-[18px] pl-[13px]">
				<svg width="6" height="10" viewBox="0 0 6 10" aria-hidden="true">
					<path d="m0 0 6 5-6 5z" />
				</svg>
				<label htmlFor="outline" className="ml-1.5">
					文本轮廓
				</label>
				<div className="ml-auto flex h-[26px] w-[110px] items-center rounded-xs border border-[#cfd2d9] bg-white pr-1">
					<select
						id="outline"
						className="flex-1 appearance-none bg-transparent pr-1 text-center outline-none"
					>
						<option>无</option>
					</select>
					<Caret />
				</div>
			</div>
		</aside>
	);
}

function SubTab({
	label,
	active,
	children,
}: {
	label: string;
	active?: boolean;
	children: ReactNode;
}) {
	return (
		<button
			type="button"
			className={clsx(
				"-mb-px flex h-12 flex-col items-center border-b-2",
				active
					? "mr-2 w-[68px] border-[#3f7fe0] font-bold text-[#3f7fe0]"
					: "mr-0.5 w-14 border-transparent",
			)}
		>
			<Icon w={20} h={20} className="text-[#2b3140]">
				{children}
			</Icon>
			<span className="mt-1.5">{label}</span>
		</button>
	);
}

function SwatchSelect({ label, tall }: { label: string; tall?: boolean }) {
	return (
		<div
			className={clsx(
				"ml-auto flex w-[110px] items-center gap-1 rounded-xs border border-[#cfd2d9] bg-white p-0.5",
				tall ? "h-[25px]" : "h-[21px]",
			)}
		>
			<select aria-label={label} className="h-full w-[92px] appearance-none bg-black outline-none">
				<option value="#000000" />
			</select>
			<Caret />
		</div>
	);
}

function FillRadio({
	text,
	hotkey,
	checked,
}: {
	text: string;
	hotkey: string;
	checked?: boolean;
}) {
	return (
		<label className="flex h-[25px] items-center gap-1">
			<input
				type="radio"
				name="fill"
				defaultChecked={checked}
				className="h-3.5 w-3.5 appearance-none rounded-full border border-[#a9adb6] bg-white checked:bg-[radial-gradient(circle,#23272f_3px,transparent_4px)]"
			/>
			<span>
				{text}(<u className="underline-offset-2">{hotkey}</u>)
			</span>
		</label>
	);
}

/* ---------- right tool strip ---------- */

function SideToolbar() {
	return (
		<aside className="flex w-11 shrink-0 flex-col items-center border-l border-[#dcdfe6]">
			<div className="mt-2.5 h-1 w-5 border-y border-[#c5c8cf]" />
			<div className="mt-3 flex flex-col gap-1">
				<SideButton label="快捷">
					<path d="M15 1c-4 0-6.500 1.500-8.500 4.500L3 6 1.500 8.500l3 .5 2.500 2.500.5 3L10 13l.5-3.500C13.500 7.500 15 5 15 1z" />
					<circle cx="10.500" cy="5.500" r="1.500" />
					<path d="m1 12 2-2M1 15l3.500-3.500M4 15l2-2" />
				</SideButton>
				<SideButton label="样式">
					<path d="M14 1.500 7 8.500l1.500 2 7-7zM7 8.500C4 8.500 4 12 1 14c4 .5 7 0 7.500-3.500M9 14.500h7" />
				</SideButton>
				<SideButton label="选择">
					<path d="M4 1v13l3.500-3 2 4.500 2.500-1-2-4.500h4.500z" />
				</SideButton>
				<SideButton label="属性" active>
					<circle cx="3" cy="4" r="2" />
					<circle cx="11" cy="12" r="2" />
					<path d="M5 4h11M0 12h9M13 12h3" />
				</SideButton>
				<SideButton label="素材">
					<path d="M7 14.500H2.500V7C.5 6 .5 4 1.500 1.500h12C15 4 15 6 14 7M4 5c0 3 3 3 3.500 0" />
					<path d="M12 15c-3 0-4-2-4-4 2 0 3 1 3.500 2 0-2 .5-4 2-5 1 2 .5 3-.5 5 1-1 2-1.500 3-1.500 0 2-1.500 3.500-4 3.500z" fill="currentColor" fillOpacity=".5" />
				</SideButton>
				<SideButton label="灵感">
					<path d="M5.500 15.500v-2.500a6.300 6.300 0 1 1 5 0v2.500z" />
					<path d="m9 3-3.500 4.500H8L7 11l3.500-4.500H8z" />
				</SideButton>
				<SideButton label="阅读">
					<path d="M7.500 14.500V3C5.500 1.500 3 1.500.5 1.500v12c3 0 5 0 7 1 1-.7 2-1 3-1M7.500 3c2-1.500 5-1.500 7.500-1.500V6" />
					<circle cx="12.500" cy="10" r="2.500" />
					<path d="M15 7v7" />
				</SideButton>
			</div>
			<div className="mt-auto mb-6 h-px w-9 bg-[#d5d8de]" />
			<Icon w={16} h={4} className="mb-[15px]">
				<circle cx="2" cy="2" r="1.500" strokeWidth="1" />
				<circle cx="8" cy="2" r="1.500" strokeWidth="1" />
				<circle cx="14" cy="2" r="1.500" strokeWidth="1" />
			</Icon>
		</aside>
	);
}

function SideButton({
	label,
	active,
	children,
}: {
	label: string;
	active?: boolean;
	children: ReactNode;
}) {
	return (
		<button
			type="button"
			aria-label={label}
			className={clsx(
				"flex h-8 w-8 items-center justify-center",
				active && "rounded-xs bg-[#d9dde6]",
			)}
		>
			<Icon>{children}</Icon>
		</button>
	);
}

/* ---------- status bar ---------- */

function StatusBar() {
	return (
		<footer className="flex h-[29px] shrink-0 items-center border-t border-[#dfe2e8] pl-2.5">
			<span>页码: 1</span>
			<VLine className="mr-2 ml-1.5 h-4" />
			<span>页面: 1/1</span>
			<VLine className="mx-2 h-4" />
			<span>节: 1/1</span>
			<span className="ml-4">设置值: 3.5厘米</span>
			<VLine className="mx-2 h-4" />
			<span>行: 2</span>
			<span className="ml-3">列: 1</span>
			<VLine className="mr-2 ml-3 h-4" />
			<span>字数: 0</span>
			<button type="button" className="ml-2.5 flex items-center gap-1">
				<Icon w={15} h={14}>
					<path d="M5 .5H.5v13h14V.5H10M5 4l5 6M10 4l-5 6" />
				</Icon>
				拼写检查
				<Caret />
			</button>
			<button type="button" className="ml-2.5 flex items-center gap-1">
				<Icon w={15} h={15}>
					<path d="M5 .5H.5v13H5M9 .5h4.500V4" />
					<circle cx="8.500" cy="7" r="3" />
					<path d="m10.500 9.500 3.500 5" />
				</Icon>
				内容检查
				<Caret />
			</button>
			<VLine className="ml-2 h-4" />

			<div className="ml-auto flex items-center pr-[17px]">
				<IconButton label="护眼模式" active>
					<Icon w={18} h={16}>
						<path d="M1 10c4-6 12-6 16 0-4 6-12 6-16 0zM9 0v3M4 1.500l1 2.500M14 1.500 13 4" />
						<circle cx="9" cy="10" r="2.500" />
					</Icon>
				</IconButton>
				<VLine className="mr-[11px] ml-[9px] h-4" />
				<div className="flex gap-0.5">
					<IconButton label="页面视图" active>
						<Icon>
							<path d="M1.500 1h9l4 4v10h-13zM4.500 6h6M4.500 10h7" />
						</Icon>
					</IconButton>
					<IconButton label="大纲">
						<Icon>
							<path d="M0 2h2M4 2h12M2 6h2M6 6h10M2 10h2M6 10h10M0 14h2M4 14h12" />
						</Icon>
					</IconButton>
					<IconButton label="阅读版式">
						<Icon>
							<path d="M8 3.500V15M8 3.500C6 1.500 3 1.500.5 1.500v12H6l2 1.500 2-1.500h5.500v-12C13 1.500 10 1.500 8 3.500z" />
						</Icon>
					</IconButton>
					<IconButton label="Web版式">
						<Icon>
							<circle cx="8" cy="8" r="7" />
							<ellipse cx="8" cy="8" rx="3.500" ry="7" />
							<path d="M1 8h14M2.500 4h11M2.500 12h11" />
						</Icon>
					</IconButton>
					<IconButton label="写作模式">
						<Icon>
							<path d="m2 10 8-8.500c2-1.500 5 1 3.500 3L6 13.500l-5 2zM9 3l3.500 3.500M8 15h8" />
						</Icon>
					</IconButton>
				</div>
				<VLine className="mx-2.5 h-4" />
				<IconButton label="最佳显示比例">
					<Icon w={14} h={14}>
						<path d="M4 .5H.5V4M10 .5h3.500V4M4 13.500H.5V10M10 13.500h3.500V10M4 4h6v6H4z" />
					</Icon>
				</IconButton>
				<button type="button" className="ml-[3px] flex items-center gap-[5px]">
					112%
					<Caret />
				</button>
				<button type="button" aria-label="缩小" className="ml-3">
					<Icon w={10} h={10}>
						<path d="M0 5h10" strokeWidth="2" />
					</Icon>
				</button>
				<input
					type="range"
					aria-label="显示比例"
					defaultValue={49}
					className="ml-3 h-4 w-[143px] appearance-none bg-[linear-gradient(90deg,#3c4250_50%,#c9ccd4_50%)] bg-[length:100%_1px] bg-center bg-no-repeat outline-none [&::-webkit-slider-thumb]:h-3 [&::-webkit-slider-thumb]:w-3 [&::-webkit-slider-thumb]:appearance-none [&::-webkit-slider-thumb]:rounded-full [&::-webkit-slider-thumb]:border [&::-webkit-slider-thumb]:border-[#3c4250] [&::-webkit-slider-thumb]:bg-white"
				/>
				<button type="button" aria-label="放大" className="ml-1.5">
					<Icon w={10} h={10}>
						<path d="M0 5h10M5 0v10" strokeWidth="2" />
					</Icon>
				</button>
				<button type="button" aria-label="全屏显示" className="ml-3">
					<Icon w={15} h={15}>
						<path d="M1 5V1h4M10 1h4v4M14 10v4h-4M5 14H1v-4M1 1l4 4M14 1l-4 4M14 14l-4-4M1 14l4-4" />
					</Icon>
				</button>
			</div>
		</footer>
	);
}

/* ---------- overlays ---------- */

function MeterWidget() {
	return (
		<div className="absolute right-0 bottom-[127px] flex h-[60px] w-2.5 items-center justify-end rounded-l-sm border border-r-0 border-[#34344a] bg-[#5a5b6b] pr-0.5">
			<div className="h-[46px] w-1 bg-[repeating-linear-gradient(transparent_0_1px,#4c4d5c_1px_2px),linear-gradient(#3a3f78_25%,#e3dc5a_26%,#a9cf6a_72%,#5fd3c8_76%)]" />
		</div>
	);
}

function Watermark() {
	return (
		<div className="pointer-events-none absolute right-3 bottom-2 flex items-center gap-0.5 opacity-90">
			<svg width="42" height="40" viewBox="0 0 42 40" aria-hidden="true">
				<path d="M1 30C-2 14 14 1 41 1 26 5 11 12 9 23c-1 6 4 8 9 6C13 35 3 36 1 30z" fill="#5fa4e0" />
				<path d="M14 20c6-9 17-10 19-5 1 4-4 9-12 11 5-3 8-7 6-9-2-2-8 0-13 3z" fill="#6cadea" />
				<path d="M41 16c1 12-11 20-31 22 12-5 20-10 22-18 3-1 6-2 9-4z" fill="#79cb86" />
				<path d="M10 39c7 0 13-2 17-6-6 2-12 4-17 6z" fill="#e6df6a" />
			</svg>
			<div className="flex flex-col">
				<span className="text-[21px] leading-6 text-[#6aa6e0]">极光下载站</span>
				<a href="#xz7" className="font-['Liberation_Sans',sans-serif] text-base leading-5 font-bold text-[#74c98a]">
					www.xz7.com
				</a>
			</div>
		</div>
	);
}
